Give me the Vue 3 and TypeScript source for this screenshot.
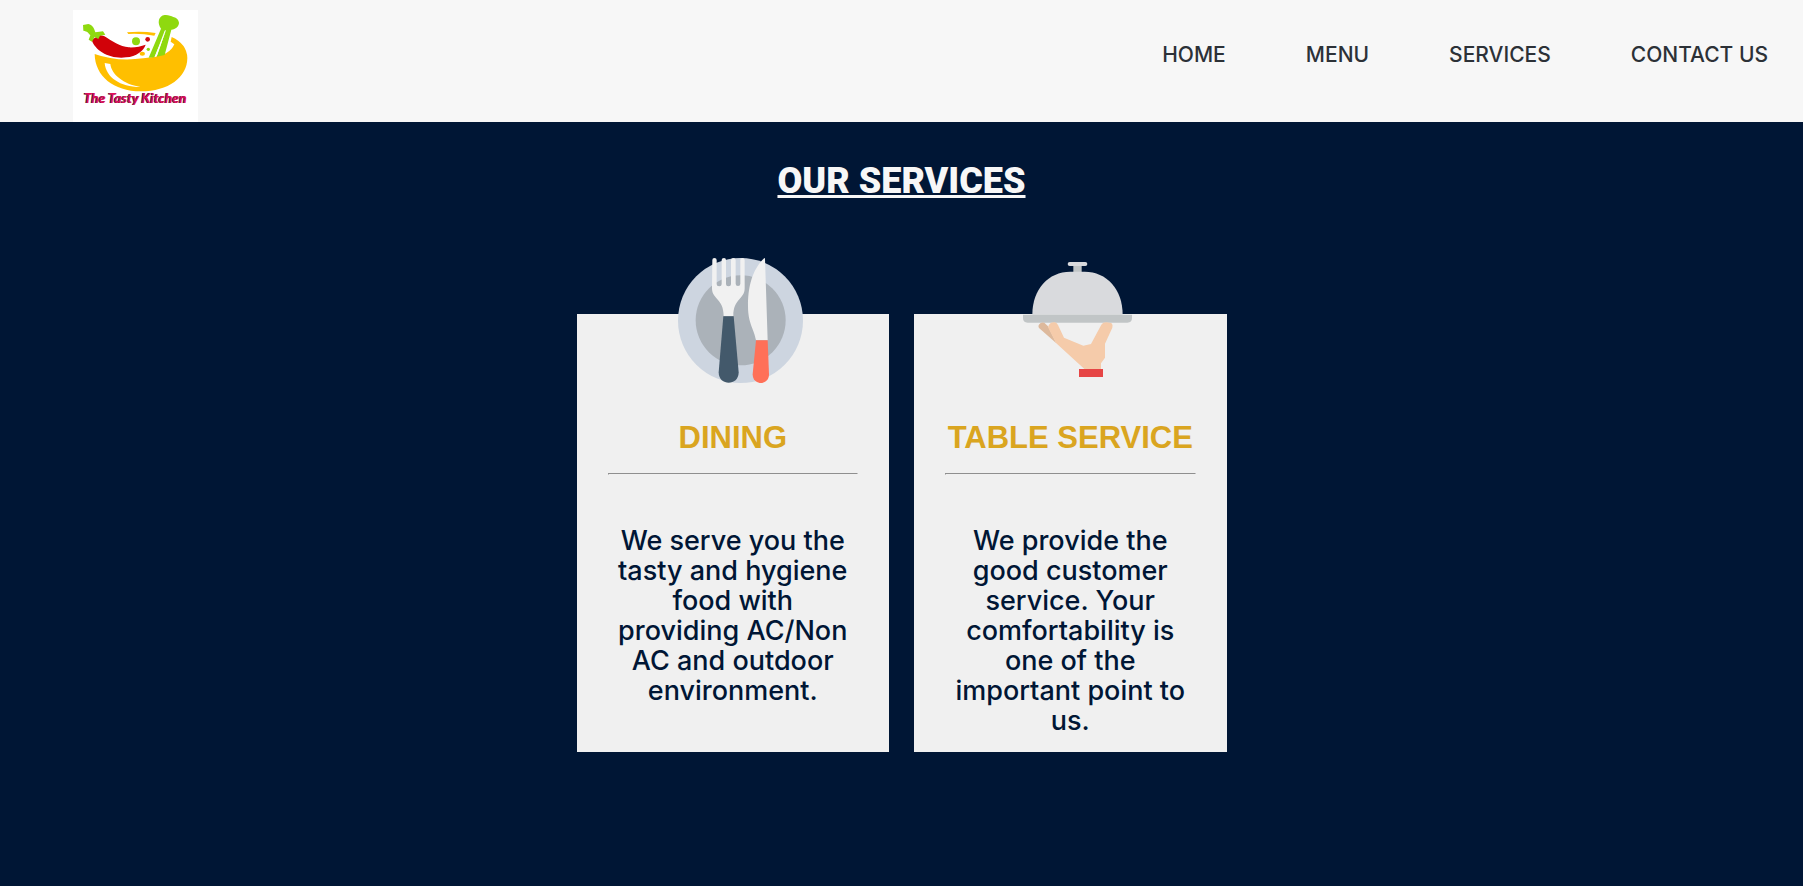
<script setup lang="ts">
interface NavLink {
  label: string
  href: string
}

interface Service {
  id: 'dining' | 'table'
  title: string
  text: string
}

const links: NavLink[] = [
  { label: 'HOME', href: '#home' },
  { label: 'MENU', href: '#menu' },
  { label: 'SERVICES', href: '#services' },
  { label: 'CONTACT US', href: '#contact' },
]

const services: Service[] = [
  {
    id: 'dining',
    title: 'DINING',
    text: 'We serve you the tasty and hygiene food with providing AC/Non AC and outdoor environment.',
  },
  {
    id: 'table',
    title: 'TABLE SERVICE',
    text: 'We provide the good customer service. Your comfortability is one of the important point to us.',
  },
]
</script>

<template>
  <div class="page">
    <header class="header">
      <a class="brand" href="#home">
        <svg class="logo" viewBox="39 30 375 336" role="img" aria-label="The Tasty Kitchen">
          <rect x="39" y="30" width="375" height="336" fill="#ffffff" />
          <!-- bowl -->
          <path d="M201 97Q245 93 287 99L283 107Q245 100 205 102Z" fill="#ffbf00" />
          <path d="M104 162Q170 186 250 175Q290 172 318 160Q336 150 343 133L332 125L335 111Q381 132 382 174C382 232 325 274 243 274C160 274 105 228 104 162Z" fill="#ffbf00" />
          <path d="M134 189L151 192C155 224 190 252 241 261C180 261 138 232 134 189Z" fill="#ffffff" />
          <!-- pestle -->
          <path d="M266 173L303 86C291 70 295 47 314 45C325 44 333 48 340 51C350 53 356 60 357 68C357 79 347 88 334 89L314 165L290 170L317 92L283 172Z" fill="#8fd90f" />
          <path d="M284 172L314 92L318 90L290 169Z" fill="#ffffff" />
          <!-- seasoning -->
          <circle cx="228" cy="124" r="12" fill="#8fd90f" />
          <circle cx="263" cy="118" r="7" fill="#d10a11" />
          <circle cx="265" cy="148" r="5" fill="#8fd90f" />
          <ellipse cx="247" cy="161" rx="8" ry="6" fill="#ffbf00" />
          <!-- chilli -->
          <path d="M95 119L119 105L132 108C155 122 181 140 206 142C226 143 242 139 257 134C251 152 229 170 198 172C151 178 105 153 95 119Z" fill="#d10209" />
          <path d="M69 75L85 72C99 76 103 86 106 97L129 94L136 104L120 107L115 117L104 111L96 125L86 119L91 106C85 98 82 94 70 92Z" fill="#8fd90f" />
          <text class="logo-shadow" x="69" y="308">The Tasty Kitchen</text>
          <text class="logo-name" x="72" y="310">The Tasty Kitchen</text>
        </svg>
      </a>
      <nav class="nav" aria-label="Main">
        <a v-for="link in links" :key="link.label" :href="link.href">{{ link.label }}</a>
      </nav>
    </header>

    <main class="services">
      <h1 class="heading">OUR SERVICES</h1>
      <div class="cards">
        <article v-for="service in services" :key="service.id" class="card">
          <svg v-if="service.id === 'dining'" class="icon" viewBox="54 39 375 375" aria-hidden="true">
            <circle cx="241.500" cy="226.500" r="187.500" fill="#cdd5e0" />
            <circle cx="242" cy="226" r="135" fill="#abb2b9" />
            <!-- fork -->
            <path d="M157 45Q157 39 163 39Q170 39 170 45V116A7 7 0 0 0 185 116V45Q185 39 192 39Q198 39 198 45V116A7 7 0 0 0 213 116V45Q213 39 220 39Q227 39 227 45V116A7 7 0 0 0 241 116V45Q241 39 247 39Q254 39 254 45V130C254 163 220 161 220 213H191C191 161 156 163 156 130Z" fill="#f1f1f1" />
            <path d="M190 214H221L236 382C236 424 176 424 176 382Z" fill="#43596b" />
            <!-- knife -->
            <path d="M313 39Q315 39 315 42L323 286H288C282 252 264 235 264 184C264 106 286 66 313 39Z" fill="#f1f1f1" />
            <path d="M288 286H323L327 388C327 423 278 423 278 388Z" fill="#ff7058" />
          </svg>
          <svg v-else class="icon" viewBox="45 39 375 375" aria-hidden="true">
            <!-- cloche -->
            <rect x="220" y="58" width="25" height="26" fill="#c1c5c6" />
            <rect x="203" y="51" width="59" height="12" rx="6" fill="#d9dadd" />
            <path d="M97 209C97 133 145 80 211 80H254C320 80 368 133 368 209Z" fill="#d9dadd" />
            <path d="M69 209H396V219Q396 233 382 233H83Q69 233 69 219Z" fill="#c1c5c6" />
            <!-- hand -->
            <path d="M122 234Q126 231 133 233L144 244L169 295L117 249Q112 241 122 234Z" fill="#ddb99c" />
            <path d="M147 239Q153 230 165 232Q171 234 174 240L192 278L250 302L273 297L304 239Q309 231 320 232L334 234Q341 241 337 248L315 296V338L303 355V373H254L168 294L144 247Z" fill="#f5cbaa" />
            <rect x="237" y="372" width="72" height="24" fill="#e64545" />
          </svg>
          <h2 class="title">{{ service.title }}</h2>
          <hr class="rule" />
          <p class="text">{{ service.text }}</p>
        </article>
      </div>
    </main>
  </div>
</template>

<style>
body {
  margin: 0;
  background: #001635;
}
</style>

<style scoped>
.page {
  min-height: 100vh;
  background: #001635;
  font-family: Inter, "Liberation Sans", sans-serif;
}

.header {
  display: flex;
  justify-content: space-between;
  align-items: flex-start;
  padding: 10px 35px 0 73px;
  background: #f7f7f7;
}

.brand {
  display: block;
}

.logo {
  display: block;
  width: 125px;
  height: 112px;
}

.logo-name,
.logo-shadow {
  font-family: Lato, "Liberation Sans", sans-serif;
  font-size: 41px;
  font-style: italic;
  font-weight: 900;
}

.logo-name {
  fill: #e0105a;
}

.logo-shadow {
  fill: #3a2030;
}

.nav {
  display: flex;
  gap: 80px;
  padding-top: 33px;
}

.nav a {
  color: #2c3137;
  font-size: 21px;
  font-weight: 500;
  line-height: 24px;
  text-decoration: none;
}

.services {
  display: flex;
  flex-direction: column;
  align-items: center;
  padding: 38px 24px;
}

.heading {
  margin: 0 0 112px;
  color: #f7f7f7;
  font-family: Roboto, "Liberation Sans", sans-serif;
  font-size: 36px;
  font-weight: 900;
  line-height: 42px;
  text-decoration: underline;
  text-decoration-thickness: 3px;
}

.cards {
  display: grid;
  grid-template-columns: 1fr 1fr;
  gap: 25px;
  width: 100%;
  max-width: 650px;
}

.card {
  position: relative;
  padding: 106px 31px 16px;
  background: #f0f0f0;
  text-align: center;
}

.icon {
  position: absolute;
  top: -56px;
  left: 101px;
  width: 125px;
  height: 125px;
}

.title {
  margin: 0 0 17px;
  color: #daa520;
  font-family: "Liberation Sans", Arial, sans-serif;
  font-size: 31px;
  font-weight: 700;
  line-height: 36px;
  white-space: nowrap;
}

.rule {
  margin: 0 0 51px;
  border: 1px solid;
  border-color: #8f8f8f #f0f0f0 #f0f0f0 #8f8f8f;
}

.text {
  margin: 0;
  padding: 0 4px;
  color: #001635;
  font-size: 27px;
  font-weight: 500;
  line-height: 30px;
}
</style>
